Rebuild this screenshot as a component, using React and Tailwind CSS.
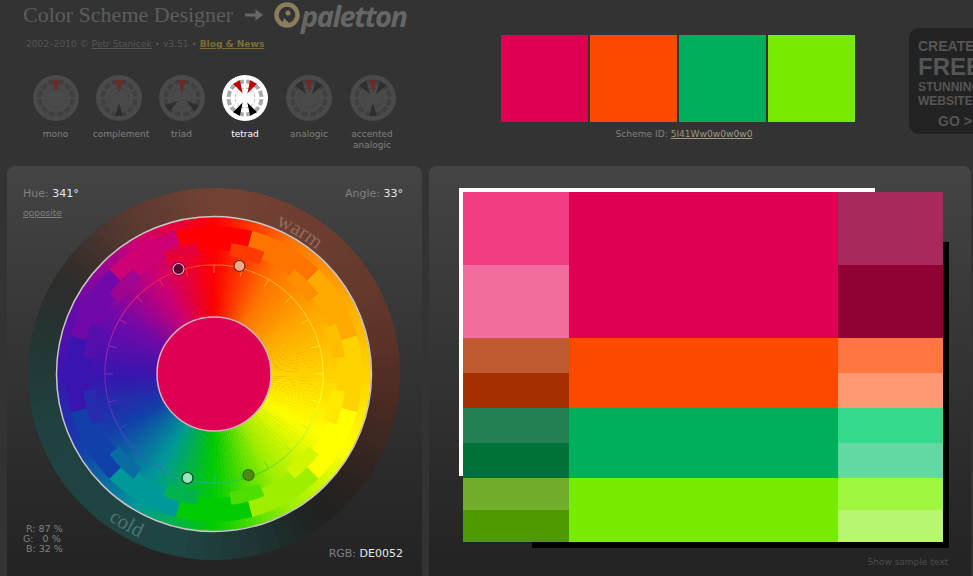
const hues = ["#ff0000", "#ff7400", "#ffaa00", "#ffd300", "#ffff00", "#9fee00", "#00cc00", "#009999", "#1240ab", "#3914af", "#7109aa", "#cd0074"];

const toRgb = (h) => [1, 3, 5].map((i) => parseInt(h.slice(i, i + 2), 16));

// colour of the wheel at an angle, mixed between the 12 stops
function hueAt(a, light = 0) {
  const p = (((a % 360) + 360) % 360) / 30;
  const i = Math.floor(p);
  const c1 = toRgb(hues[i % 12]);
  const c2 = toRgb(hues[(i + 1) % 12]);
  const c = c1.map((v, k) => {
    const m = v + (c2[k] - v) * (p - i);
    return Math.round(m + (255 - m) * light);
  });
  return `rgb(${c[0]},${c[1]},${c[2]})`;
}

const pt = (cx, cy, r, a) => {
  const t = ((a - 90) * Math.PI) / 180;
  return [cx + r * Math.cos(t), cy + r * Math.sin(t)];
};

function sector(cx, cy, r1, r2, a1, a2) {
  const [x1, y1] = pt(cx, cy, r2, a1);
  const [x2, y2] = pt(cx, cy, r2, a2);
  const [x3, y3] = pt(cx, cy, r1, a2);
  const [x4, y4] = pt(cx, cy, r1, a1);
  return `M${x1} ${y1}A${r2} ${r2} 0 0 1 ${x2} ${y2}L${x3} ${y3}A${r1} ${r1} 0 0 0 ${x4} ${y4}Z`;
}

const range = (n) => Array.from({ length: n }, (_, i) => i);

function Wheel() {
  const c = 190;
  return (
    <svg width="380" height="380" viewBox="0 0 380 380" className="absolute left-[17px] top-[18px]">
      <defs>
        <path id="warmArc" d={`M${pt(c, c, 161, 22.5).join(" ")}A161 161 0 0 1 ${pt(c, c, 161, 70).join(" ")}`} />
        <path id="coldArc" d={`M${pt(c, c, 180, 216).join(" ")}A180 180 0 0 0 ${pt(c, c, 180, 170).join(" ")}`} />
      </defs>
      {range(120).map((i) => {
        const a = i * 3;
        const stops = [[0, "#744234"], [60, "#66392d"], [95, "#4e2b23"], [125, "#2c2320"], [142, "#1f2120"], [165, "#1e3534"], [190, "#1f4543"], [250, "#1f4240"], [285, "#253331"], [302, "#2e2c2a"], [330, "#5a3a30"], [360, "#744234"]];
        let j = 0;
        while (stops[j + 1][0] <= a) j++;
        const t = (a - stops[j][0]) / (stops[j + 1][0] - stops[j][0]);
        const p = toRgb(stops[j][1]);
        const q = toRgb(stops[j + 1][1]);
        const col = `rgb(${p.map((v, k) => Math.round(v + (q[k] - v) * t)).join(",")})`;
        return <path key={i} d={sector(c, c, 150, 186, a, a + 3.2)} fill={col} />;
      })}
      {range(180).map((i) => (
        <path key={i} d={sector(c, c, 50, 157, i * 2, i * 2 + 2.3)} fill={hueAt(i * 2 + 1)} />
      ))}
      {range(12).map((i) => (
        <path key={i} d={sector(c, c, 124, 148, i * 30 - 15, i * 30 + 15)} fill={hues[i]} />
      ))}
      {range(12).map((i) => (
        <path key={i} d={sector(c, c, 119, 132, i * 30 + 7.5, i * 30 + 22.5)} fill={hueAt(i * 30 + 15)} />
      ))}
      {range(72).map((i) => (
        <path key={i} d={sector(c, c, 108.6, 109.6, i * 5, i * 5 + 5.2)} fill={hueAt(i * 5 + 22, 0.15)} />
      ))}
      {range(24).map((i) => {
        const a = i * 15;
        const [x1, y1] = pt(c, c, 109, a);
        const [x2, y2] = pt(c, c, 101, a);
        return <line key={i} x1={x1} y1={y1} x2={x2} y2={y2} stroke={hueAt(a + 20, 0.15)} strokeWidth="1" />;
      })}
      <circle cx={c} cy={c} r="157.5" fill="none" stroke="#c9c4c6" strokeWidth="1.5" />
      <circle cx={c} cy={c} r="57" fill="#de0052" stroke="#d8b0c0" strokeWidth="1.5" />
      <text fontFamily="'Liberation Serif', serif" fontSize="21" fill="#8f6a60">
        <textPath href="#warmArc">warm</textPath>
      </text>
      <text fontFamily="'Liberation Serif', serif" fontSize="21" fill="#4b7573">
        <textPath href="#coldArc">cold</textPath>
      </text>
      <circle cx="154.5" cy="85" r="5.5" fill="#5e0030" stroke="#e7b9c9" strokeWidth="1.2" />
      <circle cx="154.5" cy="85" r="6.6" fill="none" stroke="#000" strokeOpacity=".35" strokeWidth="1" />
      <circle cx="215.5" cy="82" r="5.5" fill="#ffa58c" stroke="#5a2410" strokeWidth="1.2" />
      <circle cx="163.5" cy="294" r="5.5" fill="#98e6ba" stroke="#0d3d26" strokeWidth="1.2" />
      <circle cx="224.5" cy="291" r="5.5" fill="#4f8a0b" stroke="#2f6a08" strokeWidth="1.2" />
    </svg>
  );
}

function SchemeIcon({ wedges, active }) {
  const c = 24;
  const baseFill = active ? "#ffffff" : "#4a4a4a";
  const ring = active ? "#aaaaaa" : "#3f3f3f";
  return (
    <svg width="48" height="48" viewBox="0 0 48 48">
      <circle cx={c} cy={c} r="23" fill={baseFill} />
      {range(12).map((i) => (
        <path key={i} d={sector(c, c, 14.5, 18.5, i * 30 + 4, i * 30 + 26)} fill={ring} />
      ))}
      {range(12).map((i) => (
        <path key={i} d={sector(c, c, 9.5, 10.2, i * 30 + 5, i * 30 + 25)} fill={ring} />
      ))}
      {wedges.map(([a, col], i) => {
        const [x1, y1] = pt(c, c, 5, a);
        const [x2, y2] = pt(c, c, 18.5, a - 12);
        const [x3, y3] = pt(c, c, 18.5, a + 12);
        return <path key={i} d={`M${x1} ${y1}L${x2} ${y2}L${x3} ${y3}Z`} fill={col} />;
      })}
    </svg>
  );
}

const schemes = [
  { name: "mono", w: "w-[63px]", wedges: [[0, "#6b2a2a"]] },
  { name: "complement", w: "w-[63px]", label: "ml-[5px]", wedges: [[0, "#6b2a2a"], [180, "#2e2e2e"]] },
  { name: "triad", w: "w-[63px]", wedges: [[0, "#6b2a2a"], [125, "#2e2e2e"], [235, "#2e2e2e"]] },
  { name: "tetrad", w: "w-[64px]", active: true, wedges: [[-28, "#c00000"], [28, "#c00000"], [152, "#000000"], [208, "#000000"]] },
  { name: "analogic", w: "w-[64px]", wedges: [[0, "#6b2a2a"], [-35, "#2e2e2e"], [35, "#2e2e2e"]] },
  { name: "accented analogic", w: "w-[64px]", label: "mr-[2px]", wedges: [[0, "#6b2a2a"], [-35, "#2e2e2e"], [35, "#2e2e2e"], [180, "#2e2e2e"]] },
];

const rows = [
  ["#f33d82", "#de0052", "#a82a5c", 73],
  ["#f36c9e", "#de0052", "#900035", 73],
  ["#bf5930", "#ff4800", "#ff7640", 35],
  ["#a62f00", "#ff4800", "#ff9973", 35],
  ["#228053", "#00af5b", "#36d98b", 35],
  ["#007239", "#00af5b", "#62d9a3", 35],
  ["#72ad2b", "#78ec00", "#9ef73e", 32],
  ["#4e9a00", "#78ec00", "#b8f66f", 32],
];

export default function App() {
  return (
    <div className="h-[576px] w-[973px] overflow-hidden bg-[#333333] font-['DejaVu_Sans',sans-serif] text-[10px] text-[#808080]">
      <div className="flex h-[166px]">
        <div className="w-[501px] shrink-0">
          <div className="flex h-[30px] items-center pl-[23px]">
            <span className="w-[209px] whitespace-nowrap font-['Liberation_Serif',serif] text-[22px] leading-none text-[#5c5c5c]">Color Scheme Designer</span>
            <svg width="19" height="14" viewBox="0 0 20 14" className="ml-[13px]">
              <path d="M0 5.5h11V1l8 6-8 6V8.5H0z" fill="#666666" />
            </svg>
            <svg width="26" height="26" viewBox="0 0 26 26" className="ml-[10px]">
              <circle cx="13" cy="13" r="10.5" fill="none" stroke="#8b7e5c" strokeWidth="4.5" />
              <circle cx="14" cy="11" r="2.5" fill="#8b7e5c" />
              <path d="M8 24 L10 16 L15 21z" fill="#8b7e5c" />
            </svg>
            <span className="ml-[1px] font-['Open_Sans',sans-serif] text-[29px] font-bold italic leading-none tracking-[-1.5px] text-[#666666]">paletton</span>
          </div>
          <p className="mt-[7px] pl-[26px] text-[9.1px] leading-[14px] text-[#555555]">
            2002–2010 © <span className="underline">Petr Stanicek</span> • v3.51 • <span className="font-bold text-[#7d6d35] underline">Blog &amp; News</span>
          </p>
          <div className="mt-[23px] flex pl-[24px]">
            {schemes.map((s) => (
              <div key={s.name} className={`flex ${s.w} flex-col items-center text-center leading-[11px]`}>
                <SchemeIcon wedges={s.wedges} active={s.active} />
                <span className={`mt-[7px] w-[62px] text-[9px] ${s.label || ""} ${s.active ? "text-white" : "text-[#808080]"}`}>{s.name}</span>
              </div>
            ))}
          </div>
        </div>
        <div className="flex w-[354px] shrink-0 flex-col items-center pt-[35px]">
          <div className="flex gap-[2px]">
            <div className="h-[87px] w-[87px] bg-[#de0052]" />
            <div className="h-[87px] w-[87px] bg-[#ff4800]" />
            <div className="h-[87px] w-[87px] bg-[#00af5b]" />
            <div className="h-[87px] w-[87px] bg-[#78ec00]" />
          </div>
          <p className="mt-[6px] pl-[12px] text-[9.1px] leading-[12px]">
            Scheme ID: <span className="text-[#a09a78] underline">5l41Ww0w0w0w0</span>
          </p>
        </div>
        <div className="ml-[54px] mt-[28px] h-[106px] w-[80px] shrink-0 rounded-l-[10px] bg-[#222222] pl-[9px] pt-[11px] font-['Liberation_Sans',sans-serif] font-bold text-[#555555]">
          <div className="text-[14px] leading-[15px]">CREATE</div>
          <div className="text-[24px] leading-[26px]">FREE</div>
          <div className="text-[12px] leading-[14px]">STUNNING</div>
          <div className="text-[12px] leading-[14px]">WEBSITE</div>
          <div className="ml-[20px] mt-[5px] text-[14px] leading-[16px]">GO &gt;</div>
        </div>
      </div>

      <div className="flex gap-[7px] pl-[7px]">
        <div className="relative h-[420px] w-[415px] shrink-0 rounded-[8px] bg-gradient-to-b from-[#444444] to-[#222222]">
          <Wheel />
          <div className="relative flex h-full flex-col justify-between pb-[23px] pl-[16px] pr-[19px] pt-[20px] text-[11px]">
            <div className="flex items-start justify-between">
              <div>
                <p className="leading-[16px]">Hue: <span className="text-[#e6e6e6]">341°</span></p>
                <p className="mt-[5px] text-[9px] leading-[12px] underline">opposite</p>
              </div>
              <p className="leading-[16px]">Angle: <span className="text-[#e6e6e6]">33°</span></p>
            </div>
            <div className="flex items-end justify-between">
              <div className="pb-[9px] text-[9.5px] leading-[10px] whitespace-pre">
                <p>{" R: 87 %"}</p>
                <p>{"G:   0 %"}</p>
                <p>{" B: 32 %"}</p>
              </div>
              <p className="pb-[1px] leading-[16px]">RGB: <span className="text-[#e6e6e6]">DE0052</span></p>
            </div>
          </div>
        </div>

        <div className="h-[420px] w-[542px] shrink-0 rounded-[8px] bg-gradient-to-b from-[#444444] to-[#222222] pl-[34px] pt-[26px]">
          <div className="relative w-[480px]">
            <div className="absolute left-[-4px] top-[-4px] h-[288px] w-[416px] bg-white" />
            <div className="absolute left-[69px] top-[50px] h-[306px] w-[417px] bg-black" />
            <div className="relative w-[480px]">
              {rows.map(([a, b, c, h], i) => (
                <div key={i} className="grid grid-cols-[106px_269px_105px]" style={{ height: h }}>
                  <div style={{ backgroundColor: a }} />
                  <div style={{ backgroundColor: b }} />
                  <div style={{ backgroundColor: c }} />
                </div>
              ))}
            </div>
          </div>
          <p className="mt-[14px] w-[485px] text-right text-[9px] leading-[12px] text-[#4c4c4c]">Show sample text</p>
        </div>
      </div>
    </div>
  );
}
